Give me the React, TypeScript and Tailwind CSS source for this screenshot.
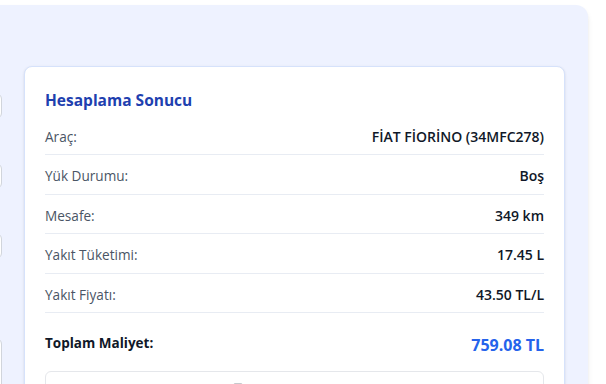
import React from "react";
import { Printer } from "lucide-react";

const rows = [
  { label: "Araç:", value: "FİAT FİORİNO (34MFC278)" },
  { label: "Yük Durumu:", value: "Boş" },
  { label: "Mesafe:", value: "349 km" },
  { label: "Yakıt Tüketimi:", value: "17.45 L" },
  { label: "Yakıt Fiyatı:", value: "43.50 TL/L" },
];

const FormColumn = () => (
  <div className="w-[240px] shrink-0 flex flex-col">
    <div className="h-[31px] mt-[27px] rounded-md border border-gray-300 bg-white" />
    <div className="h-[31px] mt-[44px] rounded-md border border-gray-300 bg-white" />
    <div className="h-[31px] mt-[44px] rounded-md border border-gray-300 bg-white" />
    <div className="h-[80px] mt-[79px] rounded-md border border-gray-300 bg-white" />
  </div>
);

export default function App() {
  return (
    <div
      className="w-[606px] h-[384px] overflow-hidden bg-white pt-[5px]"
      style={{ fontFamily: '"Open Sans", "Noto Sans", sans-serif' }}
    >
      <div className="-ml-[238px] w-[826px] h-[400px] bg-[#eef2ff] rounded-xl shadow-md flex gap-[22px] pt-[61px] pr-[23px]">
        <FormColumn />
        <div className="flex-1 self-start bg-white rounded-lg border border-[#d6e2fb] shadow-sm px-5 pt-[19px] pb-4">
          <h3 className="text-[15.5px] leading-7 mb-[1.5px] font-bold text-[#1e40af]">Hesaplama Sonucu</h3>
          <div className="flex flex-col">
            {rows.map((r) => (
              <div
                key={r.label}
                className="flex items-center justify-between pt-[11px] pb-[7.5px] leading-5 border-b border-[#e8ecf3]"
              >
                <span className="text-[13.6px] text-gray-600">{r.label}</span>
                <span className="text-[14px] font-semibold text-gray-900">{r.value}</span>
              </div>
            ))}
            <div className="flex items-start justify-between pt-[20px] pb-[14px]">
              <span className="text-[13.5px] leading-5 font-bold text-gray-900">Toplam Maliyet:</span>
              <span className="text-[16px] leading-6 font-bold text-[#2563eb]">759.08 TL</span>
            </div>
            <button className="flex items-center justify-center gap-2 h-[40px] rounded-md border border-gray-200 bg-white text-gray-800 text-sm font-medium">
              <Printer size={16} />
              <span>Sonuçları Yazdır</span>
            </button>
          </div>
        </div>
      </div>
    </div>
  );
}
